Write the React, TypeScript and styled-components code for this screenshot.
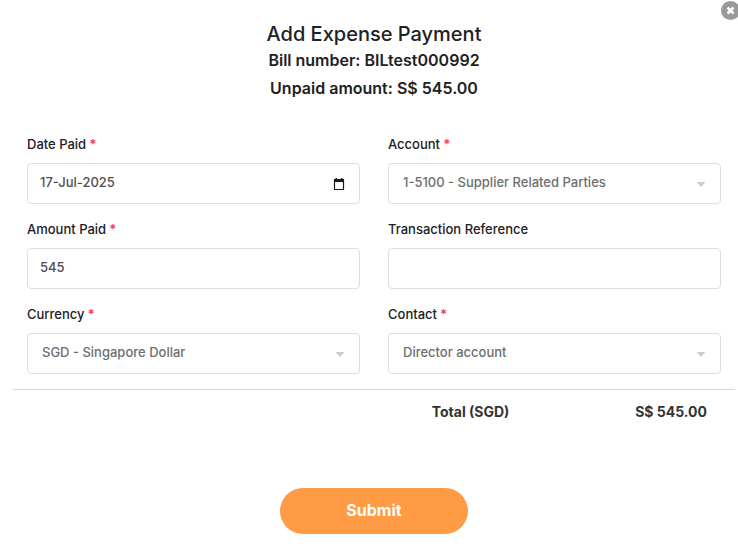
import React, { useState } from "react";
import styled, { createGlobalStyle } from "styled-components";

const GlobalStyle = createGlobalStyle`
  *, *::before, *::after { box-sizing: border-box; }
  body {
    margin: 0;
    background: #fff;
    color: #212124;
    font-family: Inter, "Liberation Sans", sans-serif;
    font-size: 13px;
  }
  button, input, select { font: inherit; }
`;

const Dialog = styled.main`
  position: relative;
  padding: 20px 3px 22px 13px;
`;

const CloseButton = styled.button`
  position: absolute;
  top: 1px;
  right: -2px;
  width: 19px;
  height: 19px;
  padding: 0;
  border: 0;
  border-radius: 50%;
  background: #999;
  color: #fff;
  display: grid;
  place-items: center;
  cursor: pointer;
`;

const Header = styled.header`
  text-align: center;
  margin-bottom: 33px;
`;

const Title = styled.h1`
  margin: 0;
  font-size: 20px;
  line-height: 28px;
  font-weight: 500;
`;

const Summary = styled.p`
  margin: 0;
  font-size: 16px;
  line-height: 28px;
  font-weight: 600;

  &:first-of-type {
    line-height: 24px;
    padding-bottom: 2px;
  }
`;

const Fields = styled.div`
  display: grid;
  grid-template-columns: 1fr 1fr;
  gap: 16px 28px;
  padding: 0 14px 15px;
`;

const Field = styled.div`
  display: flex;
  flex-direction: column;
  gap: 10px;
  min-width: 0;
`;

const Label = styled.label`
  font-weight: 500;
  line-height: 18px;
`;

const Required = styled.span`
  color: #f1416c;
  font-weight: 700;
`;

const Control = styled.div`
  display: flex;
  align-items: center;
  height: 41px;
  border: 1px solid #dedede;
  border-radius: 4px;
  background: #fff;
  position: relative;
`;

const Input = styled.input`
  flex: 1;
  min-width: 0;
  height: 100%;
  padding: 0 12px 4px;
  border: 0;
  border-radius: 4px;
  outline: 0;
  background: transparent;
  color: #4f4f4f;
  font-weight: 500;
`;

const Select = styled.select`
  appearance: none;
  flex: 1;
  min-width: 0;
  height: 100%;
  padding: 0 32px 4px 14px;
  border: 0;
  border-radius: 4px;
  outline: 0;
  background: transparent;
  color: #6e6e6e;
  font-weight: 500;
`;

const Arrow = styled.svg`
  position: absolute;
  right: 14px;
  top: 18px;
  pointer-events: none;
`;

const CalendarButton = styled.button`
  display: flex;
  margin-right: 13px;
  padding: 0;
  border: 0;
  background: none;
  color: #1b1b1b;
  cursor: pointer;
`;

const Total = styled.div`
  display: flex;
  justify-content: space-between;
  padding: 12px 28px 0 58%;
  margin-bottom: 66px;
  border-top: 1px solid #d8d8d8;
  color: #333;
  font-size: 14px;
  line-height: 20px;
  font-weight: 700;
`;

const Submit = styled.button`
  display: block;
  width: 188px;
  height: 46px;
  margin: 0 auto;
  padding: 0 0 2px;
  border: 0;
  border-radius: 23px;
  background: #ff9b44;
  color: #fff;
  font-size: 16px;
  font-weight: 700;
  cursor: pointer;
`;

type FieldLabelProps = { id: string; text: string; required?: boolean };

function FieldLabel({ id, text, required }: FieldLabelProps) {
  return (
    <Label htmlFor={id}>
      {text}
      {required && <Required> *</Required>}
    </Label>
  );
}

type TextFieldProps = FieldLabelProps & { initial: string; calendar?: boolean };

function TextField({ id, text, required, initial, calendar }: TextFieldProps) {
  const [value, setValue] = useState(initial);
  return (
    <Field>
      <FieldLabel id={id} text={text} required={required} />
      <Control>
        <Input id={id} value={value} required={required} onChange={(e) => setValue(e.target.value)} />
        {calendar && (
          <CalendarButton type="button" aria-label="Choose date">
            <svg width="14" height="14" viewBox="0 0 14 14" fill="none">
              <path d="M2.500 3.500h9v9h-9z" stroke="currentColor" strokeWidth="1.200" />
              <path d="M2 2h10v3H2zM3.500 1h1.400v2H3.500zM9.100 1h1.400v2H9.100z" fill="currentColor" />
            </svg>
          </CalendarButton>
        )}
      </Control>
    </Field>
  );
}

function SelectField({ id, text, option }: { id: string; text: string; option: string }) {
  return (
    <Field>
      <FieldLabel id={id} text={text} required />
      <Control>
        <Select id={id} defaultValue={option}>
          <option>{option}</option>
        </Select>
        <Arrow width="10" height="6" viewBox="0 0 10 6" aria-hidden="true">
          <path d="M0.500 0h9L5 5z" fill="#ccc" />
        </Arrow>
      </Control>
    </Field>
  );
}

export default function App() {
  return (
    <>
      <GlobalStyle />
      <Dialog>
        <CloseButton type="button" aria-label="Close">
          <svg width="9" height="9" viewBox="0 0 9 9">
            <path d="M1.500 1.500l6 6M7.500 1.500l-6 6" stroke="currentColor" strokeWidth="2.600" />
          </svg>
        </CloseButton>
        <Header>
          <Title>Add Expense Payment</Title>
          <Summary>Bill number: BILtest000992</Summary>
          <Summary>Unpaid amount: S$ 545.00</Summary>
        </Header>
        <form onSubmit={(e) => e.preventDefault()}>
          <Fields>
            <TextField id="date" text="Date Paid" required initial="17-Jul-2025" calendar />
            <SelectField id="account" text="Account" option="1-5100 - Supplier Related Parties" />
            <TextField id="amount" text="Amount Paid" required initial="545" />
            <TextField id="reference" text="Transaction Reference" initial="" />
            <SelectField id="currency" text="Currency" option="SGD - Singapore Dollar" />
            <SelectField id="contact" text="Contact" option="Director account" />
          </Fields>
          <Total>
            <span>Total (SGD)</span>
            <span>S$ 545.00</span>
          </Total>
          <Submit type="submit">Submit</Submit>
        </form>
      </Dialog>
    </>
  );
}
